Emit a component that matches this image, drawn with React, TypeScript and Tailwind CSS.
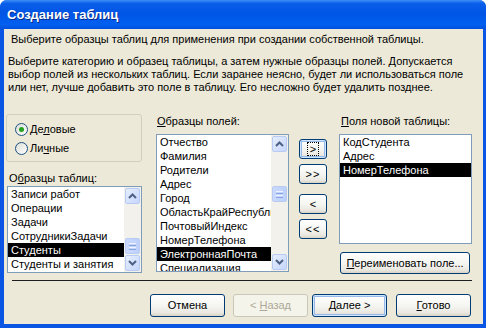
import type { ReactNode } from "react";

const tables = ["Записи работ", "Операции", "Задачи", "СотрудникиЗадачи", "Студенты", "Студенты и занятия"];
const fields = [
  "Отчество",
  "Фамилия",
  "Родители",
  "Адрес",
  "Город",
  "ОбластьКрайРеспублика",
  "ПочтовыйИндекс",
  "НомерТелефона",
  "ЭлектроннаяПочта",
  "Специализация",
];
const newFields = ["КодСтудента", "Адрес", "НомерТелефона"];

function Chevron({ up }: { up?: boolean }) {
  return (
    <svg width="9" height="6" viewBox="0 0 9 6">
      <path
        d={up ? "M1 5 L4.5 1.5 L8 5" : "M1 1 L4.5 4.5 L8 1"}
        fill="none"
        stroke="#4d6185"
        strokeWidth="2"
      />
    </svg>
  );
}

function ScrollButton({ up }: { up?: boolean }) {
  return (
    <div className="flex h-[16px] w-[15px] items-center justify-center rounded-[2px] border border-[#b7cbf5] bg-[linear-gradient(to_bottom_right,#e6eefc,#c6d6fc)]">
      <Chevron up={up} />
    </div>
  );
}

function ScrollBar({ thumbTop }: { thumbTop: number }) {
  return (
    <div className="flex w-[17px] shrink-0 flex-col items-center bg-[#f3f1ec] py-[1px]">
      <ScrollButton up />
      {/* spacer before the thumb */}
      <div className="shrink-0" style={{ height: thumbTop }} />
      <div className="flex h-[16px] w-[15px] flex-col items-center justify-center gap-[1px] rounded-[2px] border border-[#b7cbf5] bg-[linear-gradient(to_right,#cad9fc,#bcd0fb)]">
        <div className="h-[1px] w-[7px] bg-[#eef3fe]" />
        <div className="h-[1px] w-[7px] bg-[#8aa4e0]" />
        <div className="h-[1px] w-[7px] bg-[#eef3fe]" />
        <div className="h-[1px] w-[7px] bg-[#8aa4e0]" />
      </div>
      <div className="flex-1" />
      <ScrollButton />
    </div>
  );
}

function Item({ text, selected, pad }: { text: string; selected?: boolean; pad: string }) {
  return (
    <div
      className={`h-[14px] shrink-0 overflow-hidden whitespace-nowrap leading-[14px] ${pad} ${
        selected ? "bg-black text-white" : ""
      }`}
    >
      {text}
    </div>
  );
}

function Radio({ checked, label }: { checked?: boolean; label: ReactNode }) {
  return (
    <div className="flex h-[13px] items-center gap-[2px]">
      <svg width="13" height="13" viewBox="0 0 13 13">
        <defs>
          <linearGradient id={checked ? "rg1" : "rg2"} x1="0" y1="0" x2="1" y2="1">
            <stop offset="0" stopColor="#dcdcd7" />
            <stop offset="1" stopColor="#ffffff" />
          </linearGradient>
        </defs>
        <circle cx="6.5" cy="6.5" r="6" fill={`url(#${checked ? "rg1" : "rg2"})`} stroke="#1c5180" />
        {checked && <circle cx="6.5" cy="6.5" r="2.5" fill="#21a121" />}
      </svg>
      <span className="leading-[13px]">{label}</span>
    </div>
  );
}

function XPButton({
  children,
  className = "",
  focused,
  disabled,
}: {
  children: ReactNode;
  className?: string;
  focused?: boolean;
  disabled?: boolean;
}) {
  const base = "flex shrink-0 items-center justify-center rounded-[3px] border";
  const look = disabled
    ? "border-[#c9c7ba] bg-[#f5f4ea] text-[#aca899]"
    : "border-[#003c74] bg-[linear-gradient(to_bottom,#ffffff,#f4f4f0_55%,#e9e7df_85%,#d8d3c7)]";
  const ring = focused ? "shadow-[inset_0_0_0_1px_#cee7ff,inset_0_0_0_2px_#98b8ea]" : "";
  return <div className={`${base} ${look} ${ring} ${className}`}>{children}</div>;
}

export default function App() {
  return (
    <div className="h-[328px] w-[486px] bg-white font-['Liberation_Sans',Arial,sans-serif] text-[11px] text-black">
      <div className="flex h-full flex-col overflow-hidden rounded-t-[7px] bg-[#0a55e4]">
        {/* title bar */}
        <div className="flex h-[29px] shrink-0 items-center bg-[linear-gradient(to_bottom,#3d8ff7_0%,#0a5ee9_12%,#0055e5_45%,#0060f0_85%,#0050dc_100%)] pl-[7px]">
          <span className="text-[13px] font-bold text-white [text-shadow:1px_1px_0_#0a2a8a]">
            Создание таблиц
          </span>
        </div>

        {/* client area */}
        <div className="mb-[4px] ml-[4px] mr-[3px] flex-1 bg-[#ece9d8] pt-[3px]">
          <p className="ml-[7px] leading-[14px]">
            Выберите образцы таблиц для применения при создании собственной таблицы.
          </p>
          <p className="ml-[4px] mt-[9px] whitespace-nowrap leading-[13px]">
            Выберите категорию и образец таблицы, а затем нужные образцы полей. Допускается
            <br />
            выбор полей из нескольких таблиц. Если заранее неясно, будет ли использоваться поле
            <br />
            или нет, лучше добавить это поле в таблицу. Его несложно будет удалить позднее.
          </p>

          <div className="ml-[2px] mt-[20px] flex h-[160px]">
            {/* categories + tables */}
            <div className="flex w-[136px] flex-col">
              <div className="flex h-[48px] flex-col gap-[6px] rounded-[3px] border border-[#d0d0bf] pl-[8px] pt-[8px]">
                <Radio
                  checked
                  label={
                    <>
                      Де<u>л</u>овые
                    </>
                  }
                />
                <Radio
                  label={
                    <>
                      Ли<u>ч</u>ные
                    </>
                  }
                />
              </div>
              <div className="mt-[9px] pl-[3px] leading-[14px]">
                О<u>б</u>разцы таблиц:
              </div>
              <div className="ml-[1px] mt-[1px] flex h-[87px] border border-[#7f9db9] bg-white">
                <div className="flex min-w-0 flex-1 flex-col">
                  {tables.map((t) => (
                    <Item key={t} text={t} selected={t === "Студенты"} pad="pl-[3px]" />
                  ))}
                </div>
                <ScrollBar thumbTop={34} />
              </div>
            </div>

            {/* sample fields */}
            <div className="ml-[14px] flex w-[133px] flex-col">
              <div className="pl-[1px] leading-[14px]">
                <u>О</u>бразцы полей:
              </div>
              <div className="mt-[6px] flex h-[138px] border border-[#7f9db9] bg-white">
                <div className="flex min-w-0 flex-1 flex-col overflow-hidden">
                  {fields.map((f) => (
                    <Item key={f} text={f} selected={f === "ЭлектроннаяПочта"} pad="pl-[3px]" />
                  ))}
                </div>
                <ScrollBar thumbTop={34} />
              </div>
            </div>

            {/* move buttons */}
            <div className="ml-[10px] flex w-[28px] flex-col pt-[25px]">
              <XPButton focused className="h-[20px] w-[28px]">
                <span className="px-[2px] leading-[12px] outline outline-1 outline-dotted outline-black">&gt;</span>
              </XPButton>
              <XPButton className="mt-[5px] h-[20px] w-[28px] tracking-[1px]">&gt;&gt;</XPButton>
              <XPButton className="mt-[10px] h-[20px] w-[28px]">&lt;</XPButton>
              <XPButton className="mt-[5px] h-[20px] w-[28px] tracking-[1px]">&lt;&lt;</XPButton>
            </div>

            {/* new table fields */}
            <div className="ml-[12px] flex w-[133px] flex-col">
              <div className="pl-[2px] leading-[14px]">
                <u>П</u>оля новой таблицы:
              </div>
              <div className="mt-[6px] flex h-[110px] flex-col border border-[#7f9db9] bg-white">
                {newFields.map((f) => (
                  <Item key={f} text={f} selected={f === "НомерТелефона"} pad="pl-[3px]" />
                ))}
              </div>
              <XPButton className="ml-[1px] mt-[8px] h-[22px] w-[130px]">
                <span>
                  <u>П</u>ереименовать поле...
                </span>
              </XPButton>
            </div>
          </div>

          {/* separator */}
          <div className="ml-[8px] mt-[6px] h-[2px] w-[460px] border-t border-[#1f1f1f] border-b-white" />

          {/* wizard buttons */}
          <div className="mt-[12px] flex pl-[146px]">
            <XPButton className="h-[23px] w-[75px]">Отмена</XPButton>
            <XPButton disabled className="ml-[8px] h-[23px] w-[75px]">
              <span>
                &lt; <u>Н</u>азад
              </span>
            </XPButton>
            <XPButton focused className="ml-[4px] h-[23px] w-[75px]">
              <span>
                <u>Д</u>алее &gt;
              </span>
            </XPButton>
            <XPButton className="ml-[9px] h-[23px] w-[75px]">
              <span>
                <u>Г</u>отово
              </span>
            </XPButton>
          </div>
        </div>
      </div>
    </div>
  );
}
